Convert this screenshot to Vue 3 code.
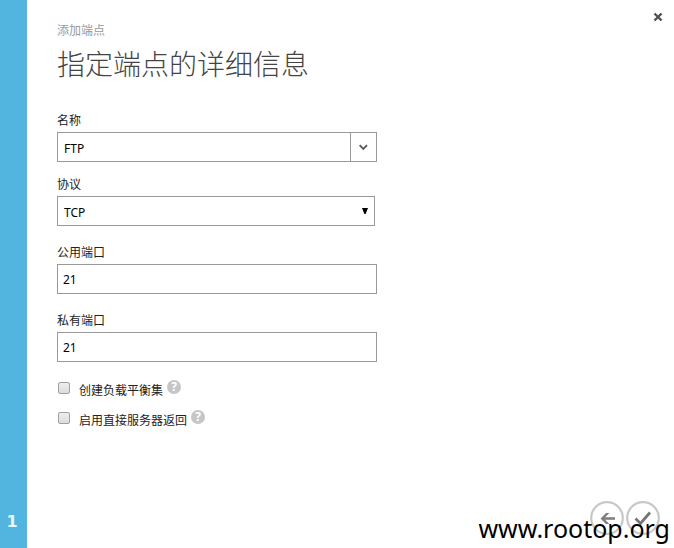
<template>
  <div class="wizard">
    <aside class="step-rail">
      <span class="step-number">{{ step }}</span>
    </aside>

    <main class="panel">
      <button type="button" class="close" aria-label="关闭">
        <svg viewBox="0 0 10 10" width="10" height="10">
          <path d="M1.5 1.5 L8.5 8.5 M8.5 1.5 L1.5 8.5" stroke="#505050" stroke-width="2.4" fill="none" />
        </svg>
      </button>

      <header class="heading">
        <p class="subtitle">添加端点</p>
        <h1 class="title">指定端点的详细信息</h1>
      </header>

      <form class="form" @submit.prevent>
        <div class="field">
          <label for="name">名称</label>
          <div class="combo">
            <input id="name" v-model="form.name" type="text" />
            <button type="button" class="combo-toggle" aria-label="展开">
              <svg viewBox="0 0 10 8" width="10" height="8">
                <path d="M0.6 2.2 L4.3 6 L8 2.2" stroke="#5a5a5a" stroke-width="1.8" fill="none" />
              </svg>
            </button>
          </div>
        </div>

        <div class="field protocol">
          <label for="protocol">协议</label>
          <div class="select-box">
            <select id="protocol" v-model="form.protocol">
              <option>TCP</option>
              <option>UDP</option>
            </select>
            <svg class="select-arrow" viewBox="0 0 6 6" width="6" height="6">
              <path d="M0 0 H6 L3.6 6 H2.4 Z" fill="#000" />
            </svg>
          </div>
        </div>

        <div v-for="port in ports" :key="port.key" class="field">
          <label :for="port.key">{{ port.label }}</label>
          <input :id="port.key" v-model="form[port.key]" type="text" class="text-box" />
        </div>

        <div class="options">
          <div v-for="option in options" :key="option.key" class="option">
            <input :id="option.key" v-model="form[option.key]" type="checkbox" />
            <label :for="option.key">{{ option.label }}</label>
            <span class="help">?</span>
          </div>
        </div>
      </form>

      <footer class="actions">
        <button type="button" class="round" aria-label="上一步">
          <svg viewBox="0 0 34 34" width="34" height="34">
            <circle cx="17" cy="17" r="15.8" stroke="#c8c8c8" stroke-width="2.2" fill="none" />
            <path d="M25 17.5 H12.5" stroke="#808080" stroke-width="2.6" fill="none" />
            <path d="M10.5 17.5 L16 12 H19.4 L14 17.5 L19.4 23 H16 Z" fill="#808080" />
          </svg>
        </button>
        <button type="button" class="round" aria-label="完成">
          <svg viewBox="0 0 34 34" width="34" height="34">
            <circle cx="17" cy="17" r="15.8" stroke="#c8c8c8" stroke-width="2.2" fill="none" />
            <path d="M9.5 17.5 L14.5 22.5 L24 11.5" stroke="#757575" stroke-width="2.8" fill="none" />
          </svg>
        </button>
      </footer>
    </main>

    <div class="watermark">www.rootop.org</div>
  </div>
</template>

<script setup>
import { reactive, ref } from 'vue'

const step = ref(1)

const form = reactive({
  name: 'FTP',
  protocol: 'TCP',
  publicPort: '21',
  privatePort: '21',
  loadBalanced: false,
  directReturn: false,
})

const ports = [
  { key: 'publicPort', label: '公用端口' },
  { key: 'privatePort', label: '私有端口' },
]

const options = [
  { key: 'loadBalanced', label: '创建负载平衡集' },
  { key: 'directReturn', label: '启用直接服务器返回' },
]
</script>

<style>
body {
  margin: 0;
  background: #fff;
}
</style>

<style scoped>
.wizard {
  position: relative;
  display: flex;
  min-height: 100vh;
  font-family: "Noto Sans", "Noto Sans CJK SC", sans-serif;
  font-size: 12px;
  line-height: 16px;
  color: #222;
}

.step-rail {
  display: flex;
  align-items: flex-end;
  justify-content: center;
  box-sizing: border-box;
  width: 27px;
  padding: 0 3px 16px 0;
  background: #52b5e0;
}

.step-number {
  font-family: "DejaVu Sans", sans-serif;
  font-size: 16px;
  font-weight: bold;
  line-height: 20px;
  color: #eaf7fd;
}

.panel {
  position: relative;
  display: flex;
  flex: 1;
  flex-direction: column;
  padding: 23px 14px 13px 30px;
}

button {
  display: flex;
  align-items: center;
  justify-content: center;
  padding: 0;
  border: 0;
  background: none;
  cursor: pointer;
}

.close {
  position: absolute;
  top: 9px;
  right: 8px;
  width: 16px;
  height: 16px;
}

.subtitle {
  margin: 0 0 5px;
  color: #999;
}

.title {
  margin: 0 0 29px;
  font-size: 28px;
  font-weight: 300;
  line-height: 40px;
  color: #444;
}

.form {
  width: 100%;
  max-width: 320px;
}

.field {
  display: flex;
  flex-direction: column;
  gap: 3px;
  margin-bottom: 19px;
}

.field:first-child {
  margin-bottom: 15px;
}

.protocol {
  padding-right: 2px;
}

.combo,
.select-box,
.text-box {
  box-sizing: border-box;
  height: 30px;
  border: 1px solid #999;
  background: #fff;
}

.combo,
.select-box {
  display: flex;
}

input[type="text"],
select {
  font-family: inherit;
  font-size: 12px;
  color: #000;
  outline: none;
}

.text-box {
  padding: 0 5px;
}

.combo input,
.select-box select {
  flex: 1;
  min-width: 0;
  padding: 2px 6px 0;
  border: 0;
  background: transparent;
}

.combo-toggle {
  width: 26px;
  border-left: 1px solid #999;
}

.select-box {
  position: relative;
}

.select-box select {
  appearance: none;
}

.select-arrow {
  position: absolute;
  top: 11px;
  right: 6px;
  pointer-events: none;
}

.options {
  margin-top: -8px;
}

.option {
  display: flex;
  align-items: center;
  height: 30px;
}

.option input {
  appearance: none;
  box-sizing: border-box;
  width: 12px;
  height: 12px;
  margin: 0 9px 0 1px;
  border: 1px solid #a0a0a0;
  border-radius: 2px;
  background: linear-gradient(#eee, #dcdcdc);
}

.option input:checked {
  background: #52b5e0;
}

.option label {
  padding-top: 5px;
}

.help {
  width: 14px;
  height: 14px;
  margin: 0 0 2px 4px;
  border-radius: 50%;
  background: #c6c6c6;
  font-size: 12px;
  font-weight: bold;
  line-height: 14px;
  text-align: center;
  color: #fff;
}

.actions {
  display: flex;
  justify-content: flex-end;
  gap: 2px;
  margin-top: auto;
}

.watermark {
  position: absolute;
  right: 4px;
  bottom: 2px;
  font-size: 25px;
  line-height: 36px;
  color: #000;
  pointer-events: none;
}
</style>
